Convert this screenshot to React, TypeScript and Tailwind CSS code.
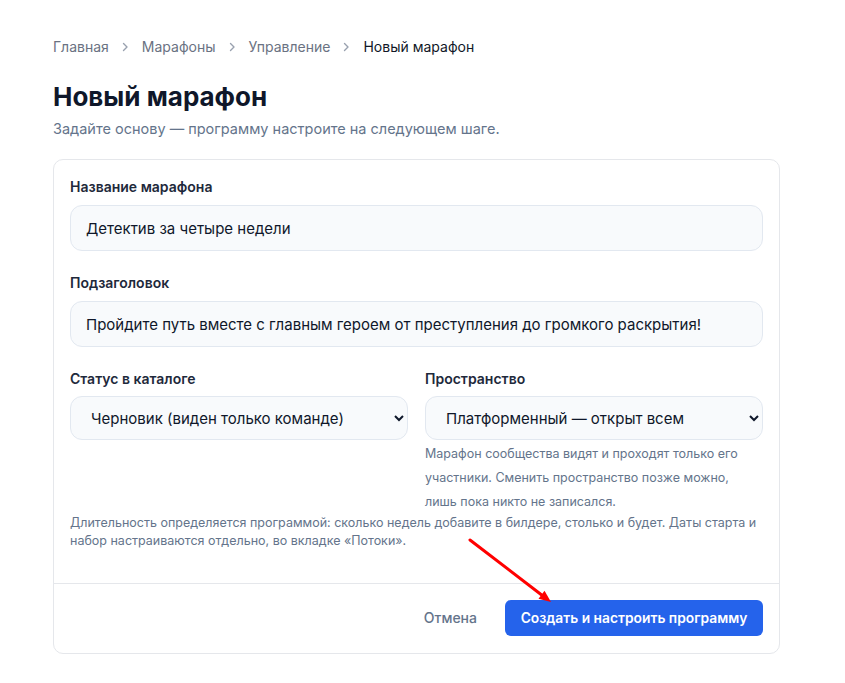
import React from 'react';

const Chevron = () => (
  <svg width="9" height="10" viewBox="0 0 9 10" className="text-gray-400">
    <path d="M2.5 1.5 6 5 2.5 8.5" fill="none" stroke="currentColor" strokeWidth="1.4" strokeLinecap="round" strokeLinejoin="round" />
  </svg>
);

const Label = ({ children, tight }: { children: React.ReactNode; tight?: boolean }) => (
  <label className={`block text-sm leading-5 font-semibold text-[#1e293b] ${tight ? 'mb-[7px]' : 'mb-2'}`}>
    {children}
  </label>
);

const inputCls =
  'w-full h-[46px] rounded-xl border border-[#e2e8f0] bg-[#f8fafc] px-[15px] text-[15px] text-[#0f172a] outline-none';
const selectCls =
  'w-full h-[44px] rounded-xl border border-[#e2e8f0] bg-[#f8fafc] px-4 text-[15px] text-[#0f172a] outline-none';

const App: React.FC = () => {
  const crumbs = ['Главная', 'Марафоны', 'Управление'];

  return (
    <div className="relative min-h-[683px] bg-white font-['Inter',sans-serif]">
      <div className="ml-[53px] w-[727px] pt-[37px]">
        <nav className="flex items-center gap-3 text-sm leading-5">
          {crumbs.map(c => (
            <React.Fragment key={c}>
              <span className="text-gray-500">{c}</span>
              <Chevron />
            </React.Fragment>
          ))}
          <span className="text-[#111827]">Новый марафон</span>
        </nav>

        <h1 className="mt-6 text-[26px] leading-8 font-bold text-[#0f172a]">Новый марафон</h1>
        <p className="mt-1.5 text-[14.5px] leading-5 text-[#64748b]">
          Задайте основу — программу настроите на следующем шаге.
        </p>

        <div className="mt-5 rounded-[10px] border border-[#e5e7eb] bg-white">
          <div className="px-4 pt-[17px] pb-[33px]">
            <div className="flex flex-col gap-[22px]">
              <div>
                <Label>Название марафона</Label>
                <input className={inputCls} defaultValue="Детектив за четыре недели" />
              </div>
              <div>
                <Label>Подзаголовок</Label>
                <input
                  className={inputCls}
                  defaultValue="Пройдите путь вместе с главным героем от преступления до громкого раскрытия!"
                />
              </div>
              <div className="grid grid-cols-2 gap-[17px]">
                <div>
                  <Label tight>Статус в каталоге</Label>
                  <select className={selectCls} defaultValue="draft">
                    <option value="draft">Черновик (виден только команде)</option>
                    <option value="public">Опубликован</option>
                  </select>
                </div>
                <div>
                  <Label tight>Пространство</Label>
                  <select className={selectCls} defaultValue="platform">
                    <option value="platform">Платформенный — открыт всем</option>
                    <option value="community">Сообщество</option>
                  </select>
                  <p className="mt-0.5 text-[12.5px] leading-6 text-[#64748b]">
                    Марафон сообщества видят и проходят только его участники. Сменить пространство позже можно,
                    лишь пока никто не записался.
                  </p>
                </div>
              </div>
            </div>
            <p className="text-[12.5px] leading-[18px] text-[#64748b]">
              Длительность определяется программой: сколько недель добавите в билдере, столько и будет. Даты старта
              и набор настраиваются отдельно, во вкладке «Потоки».
            </p>
          </div>

          <div className="flex items-center justify-end gap-4 border-t border-[#e5e7eb] px-4 pt-4 pb-[17px]">
            <button className="px-3 h-9 text-sm font-medium text-[#64748b]">Отмена</button>
            <button className="h-9 w-[258px] rounded-md bg-[#2563eb] text-[13.8px] font-semibold text-white">
              Создать и настроить программу
            </button>
          </div>
        </div>
      </div>

      <svg className="absolute left-0 top-0 pointer-events-none" width="845" height="683">
        <line x1="470" y1="540" x2="543" y2="596" stroke="#ff0000" strokeWidth="3" strokeLinecap="round" />
        <path d="M551 602 L538.5 598.7 L544.5 590.7 Z" fill="#ff0000" />
      </svg>
    </div>
  );
};

export default App;
